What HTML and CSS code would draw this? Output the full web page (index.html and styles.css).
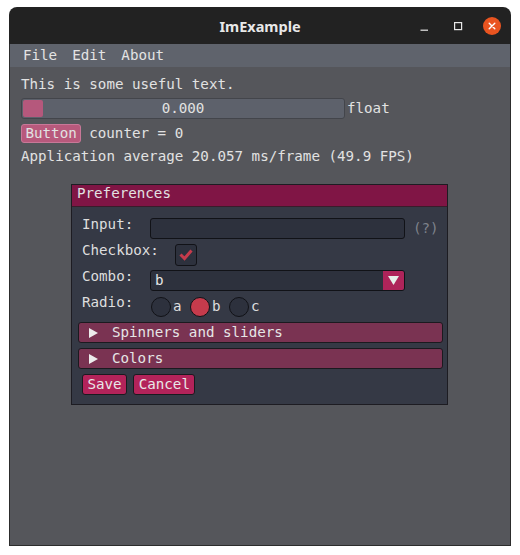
FILE: index.html
```html
<!DOCTYPE html>
<html>
<head>
<meta charset="utf-8">
<link rel="stylesheet" href="styles.css">
</head>
<body>
<div class="app">
  <div class="titlebar">
    <div class="tb-side"></div>
    <div class="tb-title">ImExample</div>
    <div class="tb-side tb-controls">
      <svg class="ctl" viewBox="0 0 18 18"><line x1="5.5" y1="13.2" x2="13" y2="13.2" stroke="#e8e8e8" stroke-width="1.2"/></svg>
      <svg class="ctl" viewBox="0 0 18 18"><rect x="5.6" y="5.6" width="7" height="7" fill="none" stroke="#e8e8e8" stroke-width="1.2"/></svg>
      <svg class="ctl" viewBox="0 0 18 18"><circle cx="9" cy="9" r="9" fill="#e95420"/><path d="M6.2 6.2 L11.8 11.8 M11.8 6.2 L6.2 11.8" stroke="#ffffff" stroke-width="1.4" stroke-linecap="round"/></svg>
    </div>
  </div>
  <div class="frame">
    <div class="menubar"><span>File</span><span>Edit</span><span>About</span></div>
    <div class="client">
      <div class="line">This is some useful text.</div>
      <div class="row slider-row">
        <div class="slider"><div class="grab"></div><span>0.000</span></div>
        <span class="slider-label">float</span>
      </div>
      <div class="row btn-row">
        <div class="btn">Button</div>
        <span>counter = 0</span>
      </div>
      <div class="line spaced">Application average 20.057 ms/frame (49.9 FPS)</div>

      <div class="prefs">
        <div class="prefs-title">Preferences</div>
        <div class="prefs-body">
          <div class="prow">
            <span class="plabel">Input:</span>
            <div class="field"></div>
            <span class="help">(?)</span>
          </div>
          <div class="prow">
            <span class="plabel">Checkbox:</span>
            <div class="checkbox"><svg viewBox="0 0 22 22" width="22" height="22"><path d="M5.5 10.5 L9.5 14.5 L16.5 6.5" fill="none" stroke="#c63b4c" stroke-width="3"/></svg></div>
          </div>
          <div class="prow">
            <span class="plabel">Combo:</span>
            <div class="field combo"><span class="combo-val">b</span><div class="combo-arrow"><svg viewBox="0 0 11 9" width="11" height="9"><polygon points="0,0 11,0 5.5,9" fill="#e6f0ea"/></svg></div></div>
          </div>
          <div class="prow">
            <span class="plabel">Radio:</span>
            <div class="radios">
              <div class="radio"><span class="dot"></span><span>a</span></div>
              <div class="radio"><span class="dot on"></span><span>b</span></div>
              <div class="radio"><span class="dot"></span><span>c</span></div>
            </div>
          </div>
          <div class="header"><svg class="tri" viewBox="0 0 9 10" width="9" height="10"><polygon points="0,0 9,5 0,10" fill="#ececec"/></svg><span>Spinners and sliders</span></div>
          <div class="header"><svg class="tri" viewBox="0 0 9 10" width="9" height="10"><polygon points="0,0 9,5 0,10" fill="#ececec"/></svg><span>Colors</span></div>
          <div class="prow buttons">
            <div class="pbtn">Save</div>
            <div class="pbtn">Cancel</div>
          </div>
        </div>
      </div>
    </div>
  </div>
</div>
</body>
</html>
```
FILE: styles.css
```css
html, body {
  margin: 0;
  padding: 0;
  background: #ffffff;
}

.app {
  margin: 7px 0 0 9px;
  width: 502px;
  font-family: "DejaVu Sans Mono", "Liberation Mono", monospace;
  font-size: 14.2px;
  line-height: 17px;
  color: #e2e2e2;
}

.titlebar {
  height: 37px;
  background: #222222;
  border-radius: 8px 8px 0 0;
  display: grid;
  grid-template-columns: 1fr auto 1fr;
  align-items: center;
}

.tb-title {
  font-family: "Noto Sans", "DejaVu Sans", sans-serif;
  font-weight: 700;
  font-size: 14.5px;
  color: #e8e8e8;
  padding-top: 1px;
}

.tb-controls {
  display: flex;
  justify-content: flex-end;
  gap: 16px;
  padding-right: 10px;
}

.ctl {
  width: 18px;
  height: 18px;
  display: block;
}

.frame {
  border: 1px solid #2c2c2c;
  border-top: none;
}

.menubar {
  height: 23px;
  background: #5f636c;
  display: flex;
  align-items: center;
  gap: 15px;
  padding-left: 13px;
  color: #e4e4e4;
}

.client {
  position: relative;
  height: 478px;
  background: #55565b;
  box-sizing: border-box;
  padding: 9px 10px 0 11px;
}

.line {
  white-space: pre;
}

.line.spaced {
  margin-top: 5px;
}

.row {
  display: flex;
  align-items: center;
  margin-top: 5px;
}

.slider {
  position: relative;
  width: 324px;
  height: 21px;
  box-sizing: border-box;
  background: #5d616b;
  border: 1px solid #43454b;
  border-radius: 3px;
  display: flex;
  align-items: center;
  justify-content: center;
}

.grab {
  position: absolute;
  left: 1px;
  top: 1px;
  width: 20px;
  height: 17px;
  background: #b5587c;
  border-radius: 2px;
}

.slider span {
  position: relative;
}

.slider-label {
  margin-left: 2px;
}

.btn {
  height: 19px;
  box-sizing: border-box;
  background: #b8597c;
  border: 1px solid #c87898;
  border-radius: 3px;
  padding: 0 3.5px;
  display: flex;
  align-items: center;
}

.btn-row span {
  margin-left: 8px;
}

.prefs {
  position: absolute;
  left: 61px;
  top: 117px;
  width: 377px;
  box-sizing: border-box;
  background: #353945;
  border: 1px solid #1d1c22;
}

.prefs-title {
  box-sizing: border-box;
  padding-left: 5px;
  background: #801545;
  border-bottom: 1px solid #3a1c2b;
  height: 22px;
  line-height: 17px;
  padding-top: 0;
}

.prefs-body {
  padding: 11px 8px 9px 10px;
  display: flex;
  flex-direction: column;
  gap: 5px;
  color: #dedede;
}

.prow {
  height: 21px;
  display: flex;
  align-items: center;
}

.plabel {
  min-width: 68px;
  align-self: flex-start;
  margin-top: -2px;
}

.field {
  width: 255px;
  height: 21px;
  box-sizing: border-box;
  background: #2d313d;
  border: 1px solid #111217;
  border-radius: 3px;
}

.help {
  margin-left: 8px;
  color: #7e828b;
}

.checkbox {
  margin-left: 16px;
  width: 22px;
  height: 22px;
  box-sizing: border-box;
  background: #2d313d;
  border: 1px solid #111217;
  border-radius: 3px;
  display: flex;
  align-items: center;
  justify-content: center;
  overflow: hidden;
}

.checkbox svg {
  display: block;
  flex-shrink: 0;
}

.combo {
  display: flex;
  align-items: center;
  overflow: hidden;
}

.combo-val {
  padding-left: 4px;
  color: #e6e6e6;
}

.combo-arrow {
  margin-left: auto;
  width: 21px;
  height: 100%;
  background: #ae245a;
  display: flex;
  align-items: center;
  justify-content: center;
}

.combo-arrow svg {
  display: block;
}

.radios {
  display: flex;
  align-items: center;
  margin-left: 1px;
}

.radio {
  display: flex;
  align-items: center;
  margin-right: 8.5px;
}

.radio span:last-child {
  margin-left: 2px;
}

.dot {
  width: 20px;
  height: 20px;
  box-sizing: border-box;
  border-radius: 50%;
  background: #2d313d;
  border: 1px solid #111217;
}

.dot.on {
  background: #c63b4c;
}

.header {
  height: 21px;
  box-sizing: border-box;
  margin: 0 -4px;
  background: #7a3352;
  border: 1px solid #1b1a1f;
  border-radius: 3px;
  display: flex;
  align-items: center;
  color: #e6e6e6;
}

.tri {
  display: block;
  margin-left: 10px;
  margin-right: 14px;
}

.buttons {
  gap: 6px;
}

.pbtn {
  height: 21px;
  box-sizing: border-box;
  background: #b3235a;
  border: 1px solid #1a1a1f;
  border-radius: 3px;
  padding: 0 4.5px;
  display: flex;
  align-items: center;
  color: #e8e8e8;
}
```
